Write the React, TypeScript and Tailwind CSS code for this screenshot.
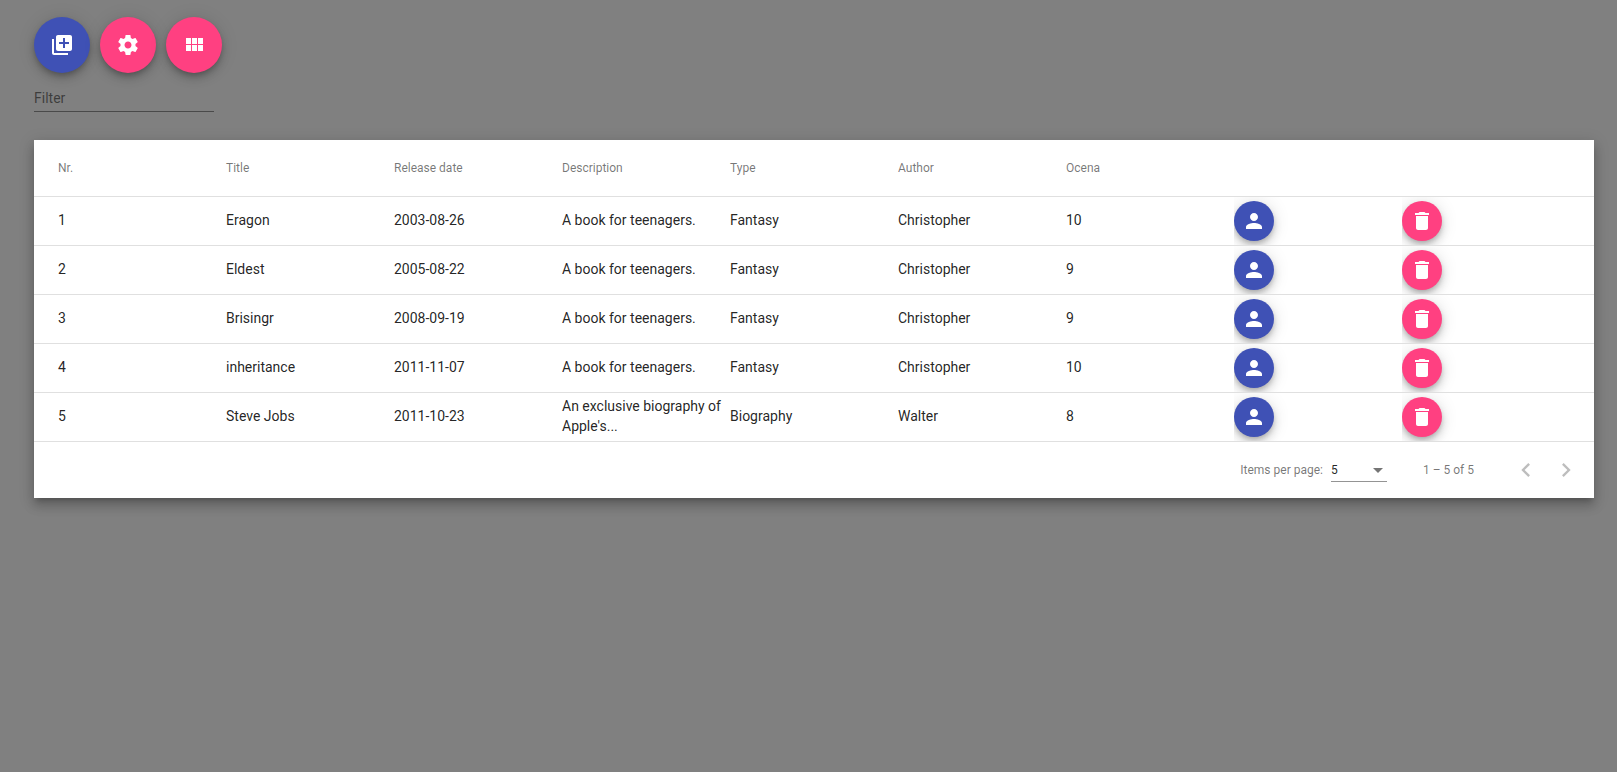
import type { ReactNode } from 'react';

const icons = {
  libraryAdd:
    'M4 6H2v14c0 1.1.9 2 2 2h14v-2H4V6zm16-4H8c-1.1 0-2 .9-2 2v12c0 1.1.9 2 2 2h12c1.1 0 2-.9 2-2V4c0-1.1-.9-2-2-2zm-1 9h-4v4h-2v-4H9V9h4V5h2v4h4v2z',
  settings:
    'M19.43 12.98c.04-.32.07-.64.07-.98s-.03-.66-.07-.98l2.11-1.65c.19-.15.24-.42.12-.64l-2-3.46c-.12-.22-.39-.3-.61-.22l-2.49 1c-.52-.4-1.08-.73-1.69-.98l-.38-2.65C14.46 2.18 14.25 2 14 2h-4c-.25 0-.46.18-.49.42l-.38 2.65c-.61.25-1.17.59-1.69.98l-2.49-1c-.23-.09-.49 0-.61.22l-2 3.46c-.13.22-.07.49.12.64l2.11 1.65c-.04.32-.07.65-.07.98s.03.66.07.98l-2.11 1.65c-.19.15-.24.42-.12.64l2 3.46c.12.22.39.3.61.22l2.49-1c.52.4 1.08.73 1.69.98l.38 2.65c.03.24.24.42.49.42h4c.25 0 .46-.18.49-.42l.38-2.65c.61-.25 1.17-.59 1.69-.98l2.49 1c.23.09.49 0 .61-.22l2-3.46c.12-.22.07-.49-.12-.64l-2.11-1.65zM12 15.5c-1.93 0-3.5-1.57-3.5-3.5s1.57-3.5 3.5-3.5 3.5 1.57 3.5 3.5-1.57 3.5-3.5 3.5z',
  viewModule:
    'M4 11h5V5H4v6zm0 7h5v-6H4v6zm6 0h5v-6h-5v6zm6 0h5v-6h-5v6zm-6-7h5V5h-5v6zm6-6v6h5V5h-5z',
  person:
    'M12 12c2.21 0 4-1.79 4-4s-1.79-4-4-4-4 1.79-4 4 1.79 4 4 4zm0 2c-2.67 0-8 1.34-8 4v2h16v-2c0-2.66-5.33-4-8-4z',
  remove: 'M6 19c0 1.1.9 2 2 2h8c1.1 0 2-.9 2-2V7H6v12zM19 4h-3.5l-1-1h-5l-1 1H5v2h14V4z',
  previous: 'M15.41 7.41L14 6l-6 6 6 6 1.41-1.41L10.83 12z',
  next: 'M10 6L8.59 7.41 13.17 12l-4.58 4.59L10 18l6-6z',
};

function Icon({ path, size = 'size-6' }: { path: string; size?: string }) {
  return (
    <svg viewBox="0 0 24 24" fill="currentColor" aria-hidden="true" className={size}>
      <path d={path} />
    </svg>
  );
}

const tones = { primary: 'bg-[#3f51b5]', accent: 'bg-[#ff4081]' };
const sizes = { regular: 'size-14', mini: 'size-10' };

type FabProps = {
  label: string;
  tone: keyof typeof tones;
  size?: keyof typeof sizes;
  children: ReactNode;
};

function Fab({ label, tone, size = 'regular', children }: FabProps) {
  return (
    <button
      type="button"
      aria-label={label}
      className={`flex shrink-0 items-center justify-center rounded-full text-white shadow-[0_3px_5px_-1px_rgba(0,0,0,0.2),0_6px_10px_0_rgba(0,0,0,0.14),0_1px_18px_0_rgba(0,0,0,0.12)] ${tones[tone]} ${sizes[size]}`}
    >
      {children}
    </button>
  );
}

const columns = ['Nr.', 'Title', 'Release date', 'Description', 'Type', 'Author', 'Ocena', '', ''];

const books = [
  ['1', 'Eragon', '2003-08-26', 'A book for teenagers.', 'Fantasy', 'Christopher', '10'],
  ['2', 'Eldest', '2005-08-22', 'A book for teenagers.', 'Fantasy', 'Christopher', '9'],
  ['3', 'Brisingr', '2008-09-19', 'A book for teenagers.', 'Fantasy', 'Christopher', '9'],
  ['4', 'inheritance', '2011-11-07', 'A book for teenagers.', 'Fantasy', 'Christopher', '10'],
  ['5', 'Steve Jobs', '2011-10-23', "An exclusive biography of Apple's...", 'Biography', 'Walter', '8'],
];

export default function App() {
  return (
    <div className="min-h-screen bg-[#808080] pt-[17px] pr-[23px] pl-[34px] font-['Roboto',sans-serif] text-sm text-black/87">
      <div className="flex gap-2.5">
        <Fab label="Add book" tone="primary">
          <Icon path={icons.libraryAdd} />
        </Fab>
        <Fab label="Settings" tone="accent">
          <Icon path={icons.settings} />
        </Fab>
        <Fab label="Modules" tone="accent">
          <Icon path={icons.viewModule} />
        </Fab>
      </div>

      <input
        type="text"
        aria-label="Filter"
        placeholder="Filter"
        className="mt-3 block h-[27px] w-[180px] border-b border-black/42 outline-none placeholder:text-black/54"
      />

      <main className="mt-7 bg-white shadow-[0_5px_5px_-3px_rgba(0,0,0,0.2),0_8px_10px_1px_rgba(0,0,0,0.14),0_3px_14px_2px_rgba(0,0,0,0.12)]">
        <table className="block w-full">
          <thead className="block">
            <tr className="flex min-h-[57px] items-center border-b border-black/12 px-6">
              {columns.map((name, i) => (
                <th key={i} className="min-w-0 flex-1 text-left text-xs font-normal text-black/54">
                  {name}
                </th>
              ))}
            </tr>
          </thead>
          <tbody className="block">
            {books.map((book) => (
              <tr key={book[0]} className="flex min-h-[49px] items-center border-b border-black/12 px-6">
                {book.map((value, i) => (
                  <td key={i} className="min-w-0 flex-1 pb-0.5">
                    {value}
                  </td>
                ))}
                <td className="min-w-0 flex-1 overflow-hidden py-1">
                  <Fab label="Show author" tone="primary" size="mini">
                    <Icon path={icons.person} />
                  </Fab>
                </td>
                <td className="min-w-0 flex-1 overflow-hidden py-1">
                  <Fab label="Delete book" tone="accent" size="mini">
                    <Icon path={icons.remove} />
                  </Fab>
                </td>
              </tr>
            ))}
          </tbody>
        </table>

        <div className="flex min-h-14 items-center justify-end px-2 text-xs text-black/54">
          <label htmlFor="page-size">Items per page:</label>
          <div className="relative ml-2 w-14">
            <select
              id="page-size"
              defaultValue="5"
              className="block h-6 w-full appearance-none border-b border-black/42 text-black/87 outline-none"
            >
              <option>5</option>
              <option>10</option>
              <option>20</option>
            </select>
            <svg
              viewBox="0 0 10 5"
              fill="currentColor"
              aria-hidden="true"
              className="pointer-events-none absolute top-2.5 right-1 h-[5px] w-2.5"
            >
              <path d="M0 0h10L5 5z" />
            </svg>
          </div>
          <span className="mr-8 ml-9">1 – 5 of 5</span>
          <button
            type="button"
            aria-label="Previous page"
            disabled
            className="flex size-10 items-center justify-center text-black/26"
          >
            <Icon path={icons.previous} size="size-7" />
          </button>
          <button
            type="button"
            aria-label="Next page"
            disabled
            className="flex size-10 items-center justify-center text-black/26"
          >
            <Icon path={icons.next} size="size-7" />
          </button>
        </div>
      </main>
    </div>
  );
}
